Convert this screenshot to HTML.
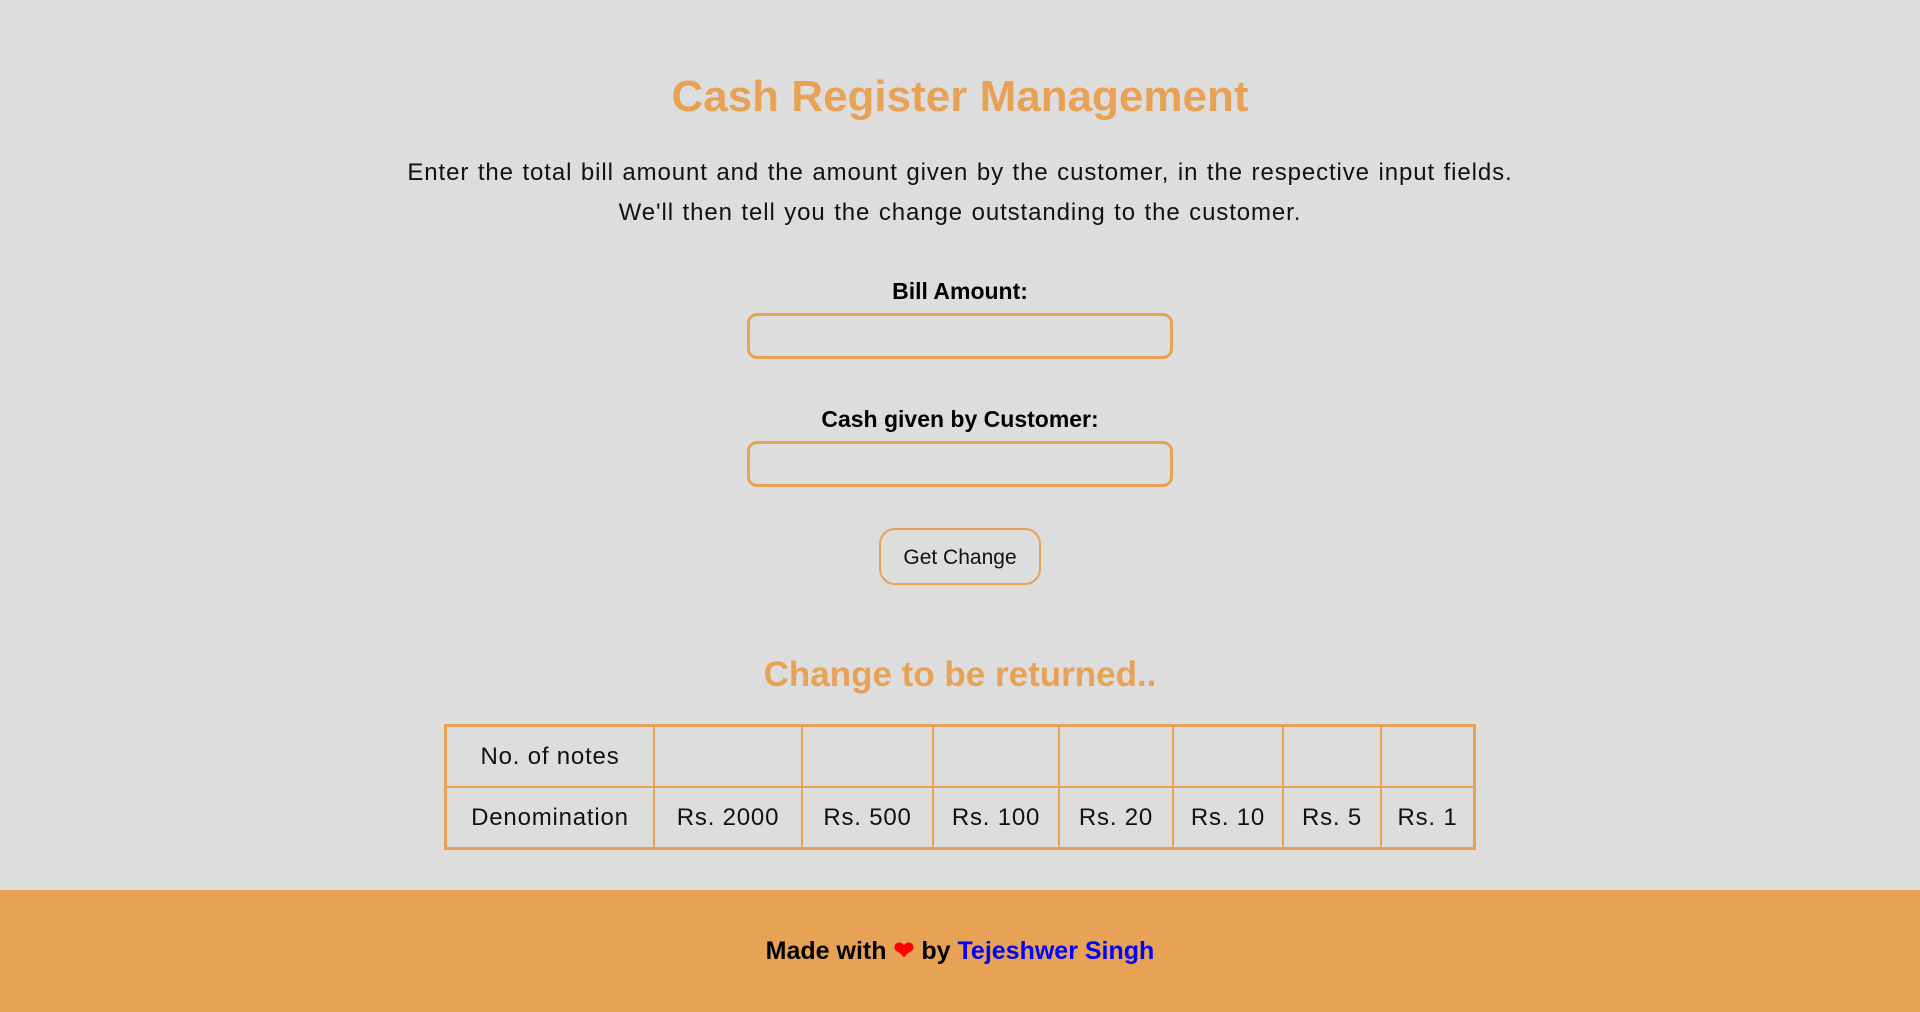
<!DOCTYPE html>
<html><head><style>
body{margin:0;width:1920px;height:1012px;background:#dddddd;font-family:"Liberation Sans",sans-serif;position:relative;overflow:hidden;}
.c{position:absolute;left:0;width:1920px;text-align:center;}
h1{margin:0;color:#e8a256;font-size:44px;font-weight:bold;}
.p{font-size:24px;color:#111;line-height:40px;letter-spacing:0.9px;word-spacing:1px;}
.lab{font-size:23px;font-weight:bold;color:#000;}
.inp{position:absolute;left:747px;width:420px;height:40px;border:3px solid #e8a256;border-radius:10px;}
.btn{position:absolute;left:879px;top:528px;width:158px;height:53px;border:2px solid #e8a256;border-radius:16px;font-size:21px;line-height:55px;text-align:center;color:#111;}
table{position:absolute;left:444px;top:724px;width:1032px;height:126px;border-collapse:collapse;border:3px solid #e8a256;font-size:24px;color:#111;letter-spacing:0.8px;}
td{border:2px solid #e8a256;text-align:center;padding:0;}
.foot{position:absolute;left:0;top:890px;width:1920px;height:122px;background:#e8a256;text-align:center;line-height:122px;font-size:25px;font-weight:bold;color:#000;}
a{color:#0000ff;text-decoration:none;}
</style></head><body>
<div class="c" style="top:72px"><h1>Cash Register Management</h1></div>
<div class="c p" style="top:153px">Enter the total bill amount and the amount given by the customer, in the respective input fields.<br>We'll then tell you the change outstanding to the customer.</div>
<div class="c lab" style="top:278px">Bill Amount:</div>
<div class="inp" style="top:313px"></div>
<div class="c lab" style="top:406px">Cash given by Customer:</div>
<div class="inp" style="top:441px"></div>
<div class="btn">Get Change</div>
<div class="c" style="top:655px;color:#e8a256;font-size:35px;font-weight:bold;">Change to be returned..</div>
<table>
<tr><td style="width:206px">No. of notes</td><td style="width:146px"></td><td style="width:129px"></td><td style="width:124px"></td><td style="width:112px"></td><td style="width:108px"></td><td style="width:96px"></td><td></td></tr>
<tr><td>Denomination</td><td>Rs. 2000</td><td>Rs. 500</td><td>Rs. 100</td><td>Rs. 20</td><td>Rs. 10</td><td>Rs. 5</td><td>Rs. 1</td></tr>
</table>
<div class="foot">Made with <span style="color:#ff0000">❤</span> by <a>Tejeshwer Singh</a></div>
</body></html>
